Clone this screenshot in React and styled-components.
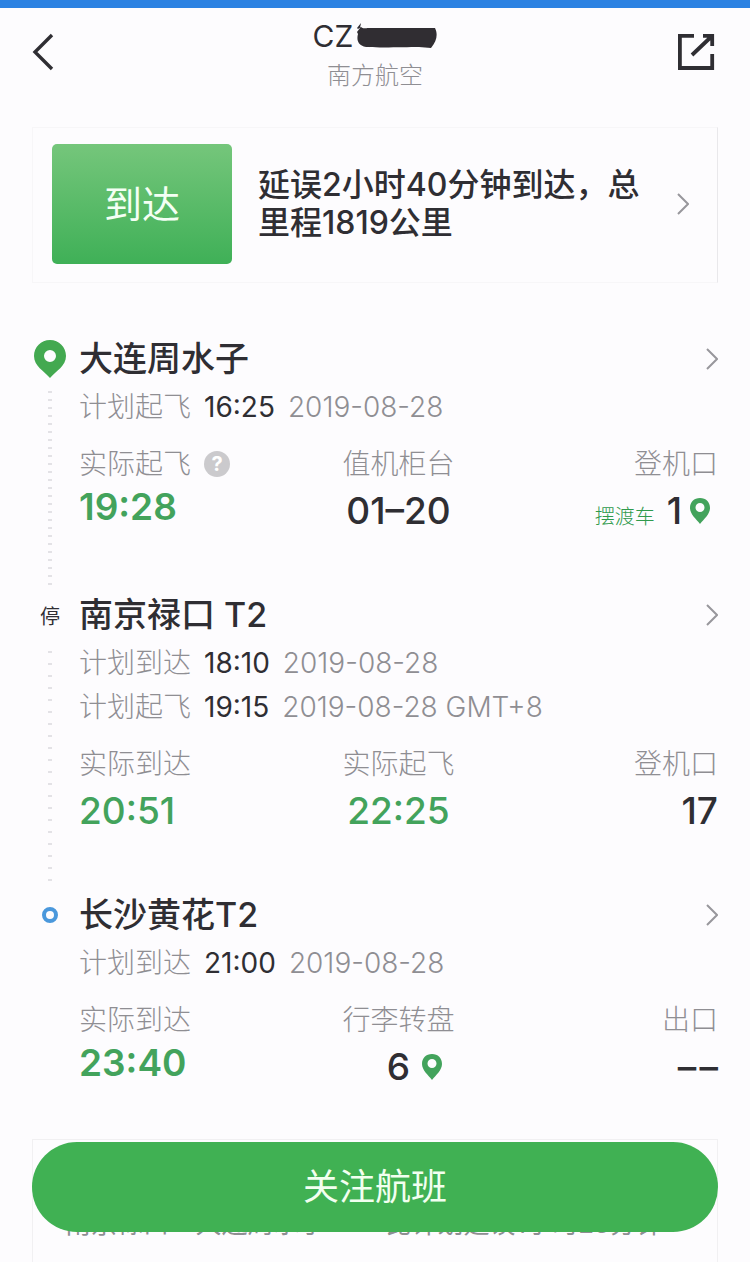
import React from 'react';
import styled, {createGlobalStyle, css} from 'styled-components';

const GlobalStyle = createGlobalStyle`
    * {
        box-sizing: border-box;
    }

    body {
        margin: 0;
        background: #fdfcfe;
        color: #2f2e33;
        font-family: Inter, 'Noto Sans CJK SC', sans-serif;
    }

    h1, h2, p, dl, dt, dd {
        margin: 0;
        font-weight: 400;
    }

    button {
        border: 0;
        padding: 0;
        background: none;
        font-family: inherit;
        color: inherit;
        cursor: pointer;
    }

    a {
        color: inherit;
        text-decoration: none;
    }

    svg {
        display: block;
        flex: none;
    }
`;

const Page = styled.div`
    display: flex;
    flex-direction: column;
    min-height: 100vh;
    border-top: 8px solid #2c82e2;
    padding: 0 32px;
`;

const Header = styled.header`
    display: flex;
    justify-content: space-between;
    align-items: center;
    height: 88px;
`;

const HeaderTitles = styled.div`
    display: flex;
    flex-direction: column;
    align-items: center;
    padding-top: 8px;
`;

const FlightNumber = styled.h1`
    display: flex;
    align-items: center;
    gap: 4px;
    font-size: 30px;
    line-height: 40px;
`;

const Airline = styled.p`
    font-size: 24px;
    font-weight: 300;
    line-height: 40px;
    color: #8f8e93;
`;

const HeaderButton = styled.button`
    display: flex;
    justify-content: ${(props) => (props.$end ? 'flex-end' : 'flex-start')};
    align-items: center;
    width: 40px;
    height: 40px;
`;

const StatusCard = styled.a`
    display: flex;
    align-items: center;
    margin-top: 31px;
    padding: 16px 28px 18px 19px;
    border: 1px solid #f7f6f8;
    border-right-color: #e9e8eb;
`;

const StatusBadge = styled.span`
    flex: none;
    width: 180px;
    border-radius: 5px;
    background: linear-gradient(#75c67b, #3fb057);
    color: #f4fff4;
    font-size: 38px;
    line-height: 120px;
    text-align: center;
`;

const StatusText = styled.span`
    flex: 1;
    margin: 0 24px 0 26px;
    font-size: 32px;
    font-weight: 500;
    line-height: 38px;
`;

const Timeline = styled.main`
    margin-top: 50px;
`;

const StopRow = styled.section`
    display: flex;
    gap: 11px;
`;

const Rail = styled.div`
    display: flex;
    flex-direction: column;
    align-items: center;
    flex: none;
    width: 36px;
`;

const Marker = styled.div`
    display: flex;
    justify-content: center;
    align-items: center;
    height: 52px;
    font-size: 20px;
`;

const Dots = styled.div`
    flex: 1;
    width: 4px;
    margin-bottom: 4px;
    background: repeating-linear-gradient(
        transparent 0 ${(props) => props.$step - 2}px,
        #e3e2e6 ${(props) => props.$step - 2}px ${(props) => props.$step}px
    );
`;

const Ring = styled.span`
    width: 16px;
    height: 16px;
    border: 4px solid #4a98dc;
    border-radius: 50%;
`;

const StopBody = styled.div`
    flex: 1;
    min-width: 0;
    padding-bottom: 50px;
`;

const StopLink = styled.a`
    display: flex;
    justify-content: space-between;
    align-items: center;
`;

const StopName = styled.h2`
    font-size: 34px;
    font-weight: 500;
    line-height: 52px;
`;

const Plan = styled.p`
    display: flex;
    gap: 13px;
    font-size: 28px;
    line-height: 44px;
`;

const Muted = styled.span`
    font-weight: 300;
    color: #8f8e93;
`;

const Facts = styled.dl`
    display: grid;
    grid-template-columns: 1fr 1fr 1fr;
    margin-top: 16px;
`;

const Fact = styled.div`
    text-align: ${(props) => props.$align};
`;

const FactLabel = styled.dt`
    display: flex;
    align-items: center;
    justify-content: ${(props) => props.$align};
    gap: 13px;
    font-size: 28px;
    font-weight: 300;
    line-height: 38px;
    color: #8f8e93;
`;

const valueFont = css`
    font-size: 37px;
    font-weight: ${(props) => (props.$strong ? 600 : 500)};
    line-height: ${(props) => (props.$strong ? 48 : 56)}px;
`;

const FactValue = styled.dd`
    display: grid;
    grid-template-columns: ${(props) => (props.$align === 'center' ? '1fr auto 1fr' : 'auto')};
    align-items: center;
    color: ${(props) => (props.$green ? '#43a35c' : '#2f2e33')};
    ${valueFont}
`;

const ValueText = styled.span`
    grid-column: ${(props) => (props.$align === 'center' ? 2 : 1)};
`;

const PinSlot = styled.span`
    padding-left: 12px;
`;

const GateValue = styled.dd`
    display: flex;
    justify-content: flex-end;
    align-items: baseline;
    gap: 8px;
    padding-right: 8px;
    ${valueFont}
`;

const ShuttleTag = styled.small`
    margin-right: 4px;
    font-size: 20px;
    font-weight: 300;
    line-height: 20px;
    color: #2f9a4c;
`;

const HelpButton = styled.button`
    width: 26px;
    height: 26px;
    border-radius: 50%;
    background: #cbcacd;
    color: #ffffff;
    font-size: 20px;
    font-weight: 700;
    line-height: 26px;
`;

const PreviousCard = styled.section`
    flex: 1;
    display: flex;
    gap: 60px;
    margin-top: -6px;
    padding: 66px 32px 0;
    border: 1px solid #f1f0f2;
    border-bottom: 0;
    color: #8f8e93;
    font-size: 26px;
    line-height: 36px;
    white-space: nowrap;
`;

const FollowButton = styled.button`
    position: fixed;
    right: 32px;
    bottom: 30px;
    left: 32px;
    border-radius: 45px;
    background: #40b153;
    color: #f2fff0;
    font-size: 36px;
    line-height: 90px;
`;

const BackIcon = () => (
    <svg width='22' height='38' viewBox='0 0 22 38' fill='none' stroke='#2f2e33' strokeWidth='3.4'>
        <path d='M20 2L3 19L20 36'/>
    </svg>
);

const ShareIcon = () => (
    <svg width='40' height='40' viewBox='0 0 40 40' fill='none' stroke='#2f2e33' strokeWidth='3.8'>
        <path d='M16 3.8H1.9V36H34.2V22'/>
        <path d='M25 3.8H34.2V14M34 4L14 23'/>
    </svg>
);

const Chevron = () => (
    <svg width='12' height='22' viewBox='0 0 12 22' fill='none' stroke='#98979c' strokeWidth='2'>
        <path d='M1 1L11 11L1 21'/>
    </svg>
);

const Pin = () => (
    <svg width='32' height='38' viewBox='0 0 32 38' fill='#43a950'>
        <path fillRule='evenodd' d='M16 0C7 0 0 7 0 16C0 26 10 31 16 38C22 31 32 26 32 16C32 7 25 0 16 0ZM16 10A6 6 0 1 1 16 22A6 6 0 1 1 16 10Z'/>
    </svg>
);

const SmallPin = () => (
    <svg width='20' height='26' viewBox='0 0 20 26' fill='#43a35c'>
        <path fillRule='evenodd' d='M10 0C4 0 0 4 0 10C0 16 6 21 10 26C14 21 20 16 20 10C20 4 16 0 10 0ZM10 5A4.5 4.5 0 1 1 10 14A4.5 4.5 0 1 1 10 5Z'/>
    </svg>
);

const Scribble = () => (
    <svg width='80' height='26' viewBox='0 0 80 26' fill='#302d32'>
        <path d='M4 0L0 5L1 6L4 4C6 6 8 5 12 5H78C81 11 80 18 74 25L62 24C48 24 24 25 12 24C2 24 -1 18 1 11L0 9L3 5Z'/>
    </svg>
);

const aligns = ['start', 'center', 'end'];

const stops = [
    {
        name: '大连周水子',
        marker: <Pin/>,
        step: 8,
        plans: [{label: '计划起飞', time: '16:25', date: '2019-08-28'}],
        facts: [
            {label: '实际起飞', value: '19:28', green: true, strong: true, help: true},
            {label: '值机柜台', value: '01–20'},
            {label: '登机口', value: '1', shuttle: '摆渡车'},
        ],
    },
    {
        name: '南京禄口 T2',
        marker: '停',
        step: 12,
        plans: [
            {label: '计划到达', time: '18:10', date: '2019-08-28'},
            {label: '计划起飞', time: '19:15', date: '2019-08-28 GMT+8'},
        ],
        facts: [
            {label: '实际到达', value: '20:51', green: true},
            {label: '实际起飞', value: '22:25', green: true},
            {label: '登机口', value: '17'},
        ],
    },
    {
        name: '长沙黄花T2',
        marker: <Ring/>,
        plans: [{label: '计划到达', time: '21:00', date: '2019-08-28'}],
        facts: [
            {label: '实际到达', value: '23:40', green: true, strong: true},
            {label: '行李转盘', value: '6', pin: true},
            {label: '出口', value: '–\u200a–'},
        ],
    },
];

const FactItem = ({fact, align}) => (
    <Fact $align={align}>
        <FactLabel $align={align}>
            {fact.label}
            {fact.help && <HelpButton aria-label='说明'>{'?'}</HelpButton>}
        </FactLabel>
        {fact.shuttle ? (
            <GateValue>
                <ShuttleTag>{fact.shuttle}</ShuttleTag>
                {fact.value}
                <SmallPin/>
            </GateValue>
        ) : (
            <FactValue
                $align={align}
                $green={fact.green}
                $strong={fact.strong}
            >
                <ValueText $align={align}>{fact.value}</ValueText>
                {fact.pin && <PinSlot><SmallPin/></PinSlot>}
            </FactValue>
        )}
    </Fact>
);

const Stop = ({stop}) => (
    <StopRow>
        <Rail>
            <Marker>{stop.marker}</Marker>
            {stop.step && <Dots $step={stop.step}/>}
        </Rail>
        <StopBody>
            <StopLink href='#'>
                <StopName>{stop.name}</StopName>
                <Chevron/>
            </StopLink>
            {stop.plans.map((plan) => (
                <Plan key={plan.label}>
                    <Muted>{plan.label}</Muted>
                    <span>{plan.time}</span>
                    <Muted>{plan.date}</Muted>
                </Plan>
            ))}
            <Facts>
                {stop.facts.map((fact, i) => (
                    <FactItem
                        key={fact.label}
                        fact={fact}
                        align={aligns[i]}
                    />
                ))}
            </Facts>
        </StopBody>
    </StopRow>
);

const App = () => (
    <Page>
        <GlobalStyle/>
        <Header>
            <HeaderButton aria-label='返回'><BackIcon/></HeaderButton>
            <HeaderTitles>
                <FlightNumber>{'CZ'}<Scribble/></FlightNumber>
                <Airline>{'南方航空'}</Airline>
            </HeaderTitles>
            <HeaderButton
                $end={true}
                aria-label='分享'
            ><ShareIcon/></HeaderButton>
        </Header>
        <StatusCard href='#'>
            <StatusBadge>{'到达'}</StatusBadge>
            <StatusText>{'延误2小时40分钟到达，总里程1819公里'}</StatusText>
            <Chevron/>
        </StatusCard>
        <Timeline>
            {stops.map((stop) => (
                <Stop
                    key={stop.name}
                    stop={stop}
                />
            ))}
        </Timeline>
        <PreviousCard>
            <span>{'南京禄口 - 大连周水子'}</span>
            <span>{'比计划延误1小时23分钟'}</span>
        </PreviousCard>
        <FollowButton>{'关注航班'}</FollowButton>
    </Page>
);

export default App;
